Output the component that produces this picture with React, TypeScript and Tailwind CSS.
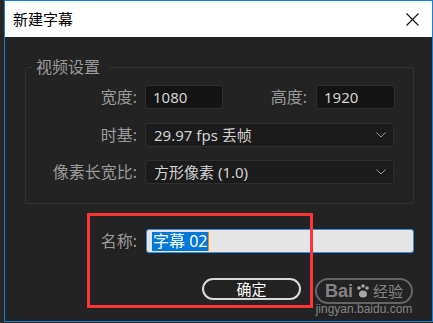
import React from 'react';

const cjk = { fontFamily: '"Noto Sans", "Noto Sans CJK SC", sans-serif' };

const Chevron = () => (
    <svg width="10" height="6" viewBox="0 0 10 6" className="shrink-0">
        <path d="M0.5 0.5 L5 5 L9.5 0.5" fill="none" stroke="#9a9a9a" strokeWidth="1" />
    </svg>
);

const Label: React.FC<{ text: string }> = ({ text }) => (
    <div className="w-[111px] text-right text-[16px] leading-[22px] text-[#9a9a9a] shrink-0">{text}</div>
);

const SelectBox: React.FC<{ value: string }> = ({ value }) => (
    <div className="ml-[8px] w-[249px] h-[24px] flex items-center justify-between pl-[8px] pr-[7px] bg-[#1b1b1b] border border-[#2e2e2e] rounded-[3px]">
        <span className="text-[15px] text-[#d2d2d2] leading-none">{value}</span>
        <Chevron />
    </div>
);

export default function App() {
    return (
        <div className="w-[433px] h-[323px] bg-[#262626] pl-[4px] pb-[1px] relative overflow-hidden" style={cjk}>
            <div className="w-[429px] h-[322px] border border-[#1a7fd6] flex flex-col bg-[#232323]">
                {/* title bar */}
                <div className="h-[36px] bg-white flex items-center justify-between pl-[8px] pr-[13px] shrink-0">
                    <span className="text-[15px] text-black leading-none">新建字幕</span>
                    <svg width="13" height="13" viewBox="0 0 13 13">
                        <path d="M0.5 0.5 L12.5 12.5 M12.5 0.5 L0.5 12.5" stroke="#111" strokeWidth="1.1" />
                    </svg>
                </div>

                <div className="flex flex-col pl-[20px] pr-[18px] pt-[19px]">
                    <fieldset className="border border-[#343434] rounded-[3px] pb-[19px] pr-[18px]">
                        <legend className="ml-[6px] pl-[4px] pr-[10px] text-[16px] leading-[22px] text-[#9a9a9a]">视频设置</legend>
                        <div className="flex items-center mt-[7px]">
                            <Label text="宽度:" />
                            <div className="ml-[8px] w-[78px] h-[24px] flex items-center pl-[7px] bg-[#141414] border border-[#2e2e2e] rounded-[3px] text-[15px] text-[#d2d2d2]">1080</div>
                            <div className="flex-1 text-right text-[16px] leading-[22px] text-[#9a9a9a]">高度:</div>
                            <div className="ml-[9px] w-[79px] h-[24px] flex items-center pl-[7px] bg-[#141414] border border-[#2e2e2e] rounded-[3px] text-[15px] text-[#d2d2d2]">1920</div>
                        </div>
                        <div className="flex items-center mt-[14px]">
                            <Label text="时基:" />
                            <SelectBox value="29.97 fps 丢帧" />
                        </div>
                        <div className="flex items-center mt-[13px]">
                            <Label text="像素长宽比:" />
                            <SelectBox value="方形像素 (1.0)" />
                        </div>
                    </fieldset>

                    <div className="flex items-center mt-[25px]">
                        <div className="w-[112px] text-right text-[16px] leading-[22px] text-[#9a9a9a] shrink-0">名称:</div>
                        <div className="ml-[9px] flex-1 h-[24px] flex items-center pl-[5px] bg-[#e6e6e6] border border-[#3d8fe0] rounded-[3px]">
                            <span className="bg-[#0078d7] text-white text-[16px] leading-[19px] px-[1px]">字幕 02</span>
                            <span className="w-[1px] h-[19px] bg-[#ff8a00]" />
                        </div>
                    </div>

                    <div className="flex mt-[25px] pl-[177px]">
                        <div className="w-[99px] h-[22px] rounded-full border-2 border-[#d8d8d8] flex items-center justify-center text-[15px] text-white leading-none">确定</div>
                    </div>
                </div>
            </div>

            {/* red annotation box */}
            <div className="absolute left-[87px] top-[213px] w-[226px] h-[95px] border-[3px] border-[#ff3535]" />

            {/* watermark */}
            <div className="absolute left-[315px] top-[278px] flex flex-col items-center text-white/45">
                <div className="w-[98px] h-[26px] rounded-full border-2 border-white/30 flex items-center justify-center gap-[2px]">
                    <span className="text-[18px] font-bold leading-none" style={{ fontFamily: '"Liberation Sans", sans-serif' }}>Bai</span>
                    <svg width="16" height="16" viewBox="0 0 16 16" className="opacity-60">
                        <circle cx="4" cy="5" r="1.8" fill="white" />
                        <circle cx="8" cy="3" r="1.8" fill="white" />
                        <circle cx="12" cy="5" r="1.8" fill="white" />
                        <ellipse cx="8" cy="11" rx="4" ry="3.5" fill="white" />
                    </svg>
                    <span className="text-[15px] leading-none">经验</span>
                </div>
                <div className="text-[12px] leading-[13px] -mt-[1px]" style={{ fontFamily: '"Liberation Sans", sans-serif' }}>jingyan.baidu.com</div>
            </div>
        </div>
    );
}
